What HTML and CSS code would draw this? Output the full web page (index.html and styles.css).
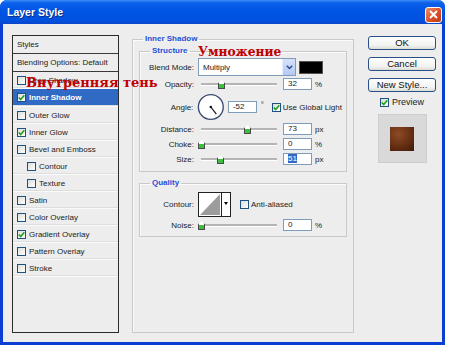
FILE: index.html
```html
<!DOCTYPE html>
<html lang="en">
<head>
  <meta charset="UTF-8" />
  <title>Layer Style</title>
  <link rel="stylesheet" href="styles.css">
</head>
<body>

  <div class="window">
    <div class="titlebar">
      <span class="title">Layer Style</span>
      <span class="close">
        <svg width="9" height="9" viewBox="0 0 9 9"><path d="M1 1 L8 8 M8 1 L1 8" stroke="#fff" stroke-width="2"/></svg>
      </span>
    </div>

    <div class="content">
      <!-- left: list of effects -->
      <div class="styles-list">
        <div class="row head">Styles</div>
        <div class="row head">Blending Options: Default</div>
        <div class="row"><span class="cb"></span>Drop Shadow</div>
        <div class="row selected"><span class="cb"><svg width="7" height="7" viewBox="0 0 7 7"><path d="M0.8 3.4 L2.7 5.6 L6.3 1.2" stroke="#21a121" stroke-width="1.6" fill="none"/></svg></span>Inner Shadow</div>
        <div class="row"><span class="cb"></span>Outer Glow</div>
        <div class="row"><span class="cb"><svg width="7" height="7" viewBox="0 0 7 7"><path d="M0.8 3.4 L2.7 5.6 L6.3 1.2" stroke="#21a121" stroke-width="1.6" fill="none"/></svg></span>Inner Glow</div>
        <div class="row"><span class="cb"></span>Bevel and Emboss</div>
        <div class="row sub"><span class="cb"></span>Contour</div>
        <div class="row sub"><span class="cb"></span>Texture</div>
        <div class="row"><span class="cb"></span>Satin</div>
        <div class="row"><span class="cb"></span>Color Overlay</div>
        <div class="row"><span class="cb"><svg width="7" height="7" viewBox="0 0 7 7"><path d="M0.8 3.4 L2.7 5.6 L6.3 1.2" stroke="#21a121" stroke-width="1.6" fill="none"/></svg></span>Gradient Overlay</div>
        <div class="row"><span class="cb"></span>Pattern Overlay</div>
        <div class="row"><span class="cb"></span>Stroke</div>
      </div>

      <!-- middle: settings -->
      <fieldset class="panel">
        <legend>Inner Shadow</legend>

        <fieldset class="group structure">
          <legend>Structure</legend>

          <div class="field blend-row">
            <label>Blend Mode:</label>
            <div class="select">
              <span>Multiply</span>
              <span class="select-btn">
                <svg width="7" height="5" viewBox="0 0 7 5"><path d="M0.8 0.8 L3.5 3.6 L6.2 0.8" stroke="#2b4a8c" stroke-width="1.4" fill="none"/></svg>
              </span>
            </div>
            <span class="swatch"></span>
          </div>

          <div class="field">
            <label>Opacity:</label>
            <div class="slider"><span class="thumb" style="left: 20px"></span></div>
            <span class="input">32</span>
            <span class="unit">%</span>
          </div>

          <div class="field angle-row">
            <label>Angle:</label>
            <svg class="dial" width="28" height="28" viewBox="0 0 28 28">
              <circle cx="14" cy="14" r="12.6" fill="#fff" stroke="#3b4b72" stroke-width="1.4"/>
              <line x1="14" y1="14" x2="19.6" y2="21.2" stroke="#111" stroke-width="1.2"/>
              <circle cx="14" cy="14" r="1.3" fill="#111"/>
            </svg>
            <span class="input">-52</span>
            <span class="deg">°</span>
            <span class="cb"><svg width="7" height="7" viewBox="0 0 7 7"><path d="M0.8 3.4 L2.7 5.6 L6.3 1.2" stroke="#21a121" stroke-width="1.6" fill="none"/></svg></span>
            <span class="check-label">Use Global Light</span>
          </div>

          <div class="field">
            <label>Distance:</label>
            <div class="slider"><span class="thumb" style="left: 46px"></span></div>
            <span class="input">73</span>
            <span class="unit">px</span>
          </div>

          <div class="field">
            <label>Choke:</label>
            <div class="slider"><span class="thumb" style="left: 0px"></span></div>
            <span class="input">0</span>
            <span class="unit">%</span>
          </div>

          <div class="field">
            <label>Size:</label>
            <div class="slider"><span class="thumb" style="left: 19px"></span></div>
            <span class="input focused"><span class="sel">51</span></span>
            <span class="unit">px</span>
          </div>
        </fieldset>

        <fieldset class="group quality">
          <legend>Quality</legend>

          <div class="field contour-row">
            <label>Contour:</label>
            <svg class="contour" width="33" height="25" viewBox="0 0 33 25">
              <rect x="0.5" y="0.5" width="32" height="24" fill="#fff" stroke="#222"/>
              <polygon points="2,23 22,2 22,23" fill="#9c9c9c"/>
              <line x1="23.5" y1="0" x2="23.5" y2="25" stroke="#222"/>
              <polygon points="26,10 30,10 28,13" fill="#000"/>
            </svg>
            <span class="cb"></span>
            <span class="check-label">Anti-aliased</span>
          </div>

          <div class="field">
            <label>Noise:</label>
            <div class="slider"><span class="thumb" style="left: 0px"></span></div>
            <span class="input">0</span>
            <span class="unit">%</span>
          </div>
        </fieldset>
      </fieldset>

      <!-- right: buttons and preview -->
      <div class="actions">
        <button>OK</button>
        <button>Cancel</button>
        <button>New Style...</button>
        <div class="preview-check">
          <span class="cb"><svg width="7" height="7" viewBox="0 0 7 7"><path d="M0.8 3.4 L2.7 5.6 L6.3 1.2" stroke="#21a121" stroke-width="1.6" fill="none"/></svg></span>
          Preview
        </div>
        <div class="preview"><div class="preview-swatch"></div></div>
      </div>
    </div>

    <div class="note note-left">Внутренняя тень</div>
    <div class="note note-right">Умножение</div>
  </div>

</body>
</html>
```

FILE: styles.css
```css
* {
  box-sizing: border-box;
}

body {
  margin: 0;
  background: #fff;
  font-family: "Liberation Sans", Arial, sans-serif;
  font-size: 8px;
  color: #1b1b1b;
}

/* window frame */
.window {
  position: relative;
  width: 445px;
  height: 345px;
  display: flex;
  flex-direction: column;
  background: #0b3fd4;
  border-radius: 7px 7px 0 0;
  padding: 0 3px 3px;
}

.titlebar {
  height: 24px;
  margin: 0 -3px;
  padding: 0 3px 0 7px;
  display: flex;
  align-items: center;
  justify-content: space-between;
  border-radius: 7px 7px 0 0;
  background: linear-gradient(#3b8cf6 0, #0a5fea 3px, #0055e5 45%, #0150df 85%, #0a45c9 100%);
}

.title {
  color: #fff;
  font-weight: bold;
  font-size: 10.5px;
  text-shadow: 1px 1px #0b2d8a;
}

.close {
  width: 17px;
  height: 16px;
  margin-top: 5px;
  display: flex;
  align-items: center;
  justify-content: center;
  border: 1px solid #fff;
  border-radius: 3px;
  background: linear-gradient(135deg, #f08c64, #d94a22 60%, #c03a18);
}

.content {
  flex: 1;
  display: flex;
  align-items: flex-start;
  background: #ededed;
  padding: 10px 0 0 9px;
}

/* effects list */
.styles-list {
  width: 107px;
  height: 298px;
  margin-top: 1px;
  border: 1px solid #2b2b2b;
}

.row {
  height: 17px;
  display: flex;
  align-items: center;
  gap: 3px;
  padding-left: 4px;
  border-bottom: 1px solid #fafafa;
  box-shadow: inset 0 -1px #dedede;
  white-space: nowrap;
}

.row.head {
  height: 18px;
  border-bottom: 1px solid #3a3a3a;
  box-shadow: none;
}

.row.sub {
  padding-left: 14px;
}

.row.selected {
  height: 18px;
  background: #316ac5;
  color: #fff;
  font-weight: bold;
}

.cb {
  width: 9px;
  height: 9px;
  flex: none;
  display: inline-flex;
  align-items: center;
  justify-content: center;
  border: 1px solid #1c5180;
  background: linear-gradient(135deg, #dcdcd7, #fff);
}

/* settings panel */
fieldset {
  margin: 0;
  min-width: 0;
  border: 1px solid #c9c9c9;
  box-shadow: inset 1px 1px #fbfbfb;
}

legend {
  padding: 0 2px;
  color: #1f4fd8;
  font-weight: bold;
  line-height: 10px;
}

.panel {
  width: 222px;
  height: 299px;
  margin-left: 13px;
  padding: 0 6px;
}

.panel > legend {
  margin-left: 4px;
}

.group {
  padding: 0 4px;
}

.group > legend {
  margin-left: 6px;
}

.structure {
  margin-top: 2px;
  padding-top: 2px;
  padding-bottom: 5px;
}

.quality {
  margin-top: 6px;
  padding-top: 4px;
  padding-bottom: 4px;
}

.field {
  height: 14px;
  display: flex;
  align-items: center;
  margin-top: 1px;
}

.field label {
  width: 50px;
  margin-right: 4px;
  text-align: right;
  white-space: nowrap;
}

.blend-row {
  height: 18px;
  margin-top: 0;
}

.select {
  width: 98px;
  height: 18px;
  display: flex;
  align-items: center;
  justify-content: space-between;
  padding-left: 4px;
  border: 1px solid #7f9db9;
  background: #fff;
}

.select-btn {
  width: 13px;
  height: 16px;
  display: flex;
  align-items: center;
  justify-content: center;
  background: linear-gradient(#d6e2fc, #b5c9f6);
  border-left: 1px solid #e6edfd;
}

.swatch {
  width: 24px;
  height: 13px;
  margin-left: 3px;
  background: #000;
  border: 1px solid #555;
}

.slider {
  position: relative;
  width: 82px;
  height: 12px;
  margin-right: 3px;
}

.slider::before {
  content: "";
  position: absolute;
  left: 3px;
  right: 3px;
  top: 5px;
  height: 2px;
  background: #b4b4b4;
  border-bottom: 1px solid #fff;
}

.thumb {
  position: absolute;
  top: 2px;
  width: 7px;
  height: 9px;
  border: 1px solid #4a4a4a;
  border-top: none;
  background: linear-gradient(#fff 55%, #3cbf3c 55%);
  clip-path: polygon(50% 0, 100% 35%, 100% 100%, 0 100%, 0 35%);
}

.input {
  width: 29px;
  height: 12px;
  padding-left: 4px;
  line-height: 10px;
  border: 1px solid #7f9db9;
  background: #fff;
}

.sel {
  background: #316ac5;
  color: #fff;
}

.unit {
  margin-left: 3px;
}

.angle-row {
  height: 28px;
  margin-top: 2px;
  margin-bottom: 1px;
}

.angle-row .input {
  margin-left: 3px;
}

.deg {
  margin: 0 8px 0 4px;
  align-self: flex-start;
  padding-top: 7px;
}

.check-label {
  margin-left: 2px;
  white-space: nowrap;
}

.contour-row {
  height: 25px;
  margin-top: 0;
  margin-bottom: 1px;
}

.contour {
  margin-right: 9px;
}

/* right column */
.actions {
  width: 68px;
  margin-left: 14px;
  margin-top: 2px;
  display: flex;
  flex-direction: column;
  align-items: center;
  gap: 7px;
}

button {
  width: 68px;
  height: 14px;
  padding: 0;
  font-family: inherit;
  font-size: 9.5px;
  line-height: 12px;
  color: #111;
  border: 1px solid #2a4f86;
  border-radius: 3px;
  background: linear-gradient(#fff, #f2f2f0 70%, #dcdcd6);
}

.preview-check {
  display: flex;
  align-items: center;
  gap: 3px;
  font-size: 9px;
  margin-top: -2px;
}

.preview {
  width: 49px;
  height: 49px;
  margin-top: 0;
  display: flex;
  align-items: center;
  justify-content: center;
  background: #d9d9d9;
  border: 1px solid #cdcdcd;
}

.preview-swatch {
  width: 24px;
  height: 24px;
  background: radial-gradient(circle at 35% 30%, #8e4b25, #5e2a10 65%, #3f1707);
}

/* red annotations drawn over the dialog */
.note {
  position: absolute;
  color: #c00000;
  font-family: "DejaVu Serif", "Liberation Serif", serif;
  font-weight: bold;
  white-space: nowrap;
  line-height: 1;
}

.note-left {
  left: 26px;
  top: 76px;
  font-size: 13px;
}

.note-right {
  left: 198px;
  top: 46px;
  font-size: 12.2px;
}
```
